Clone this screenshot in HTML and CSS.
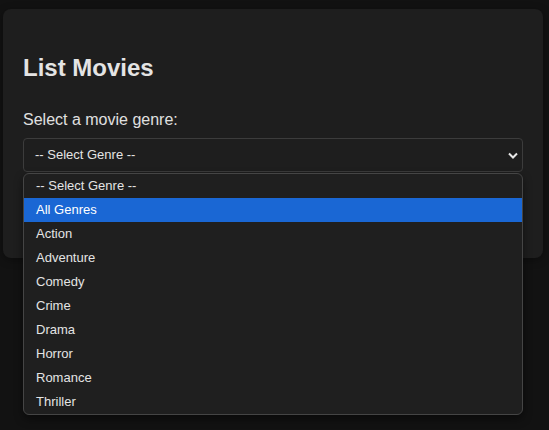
FILE: index.html
```html
<!DOCTYPE html>
<html lang="en">
<head>
<meta charset="utf-8">
<title>List Movies</title>
<link rel="stylesheet" href="styles.css">
</head>
<body>
<main class="card">
  <h2 class="title">List Movies</h2>
  <label class="label" for="genre">Select a movie genre:</label>
  <div class="select-wrap">
    <div class="select" id="genre">
      <span>-- Select Genre --</span>
      <svg class="chevron" width="10" height="7" viewBox="0 0 10 7"><path d="M1 1.5 L5 5.5 L9 1.5" fill="none" stroke="#e8e8e8" stroke-width="2"/></svg>
    </div>
    <ul class="dropdown">
      <li class="option">-- Select Genre --</li>
      <li class="option active">All Genres</li>
      <li class="option">Action</li>
      <li class="option">Adventure</li>
      <li class="option">Comedy</li>
      <li class="option">Crime</li>
      <li class="option">Drama</li>
      <li class="option">Horror</li>
      <li class="option">Romance</li>
      <li class="option">Thriller</li>
    </ul>
  </div>
  <div class="results"></div>
</main>
</body>
</html>
```

FILE: styles.css
```css
* { box-sizing: border-box; }
html, body { height: 100%; }
body {
  margin: 0;
  padding: 9px 6px 0 3px;
  background: #121212;
  font-family: "Liberation Sans", Arial, sans-serif;
  color: #e0e0e0;
  overflow: hidden;
}
.card {
  width: 540px;
  background: #1e1e1e;
  border-radius: 8px;
  padding: 20px;
  box-shadow: 0 2px 8px rgba(0,0,0,0.35);
}
.title {
  margin: 25px 0 0;
  font-size: 24px;
  font-weight: bold;
  line-height: 27.6px;
  color: #e4e4e4;
}
.label {
  display: block;
  margin-top: 29px;
  font-size: 16px;
  line-height: 18px;
  color: #e0e0e0;
}
.select-wrap {
  position: relative;
  margin-top: 9px;
}
.select {
  height: 34px;
  border: 1px solid #3c3c3c;
  border-radius: 4px;
  background: #1e1e1e;
  padding: 0 4px 0 11px;
  display: flex;
  align-items: center;
  justify-content: space-between;
  font-size: 13px;
  color: #e4e4e4;
}
.chevron { margin-top: 1px; }
.dropdown {
  position: absolute;
  top: 35px;
  left: 0;
  right: 0;
  margin: 0;
  padding: 0;
  list-style: none;
  background: #1f1f1f;
  border: 1px solid #454545;
  border-radius: 6px;
  overflow: hidden;
  box-shadow: 0 4px 10px rgba(0,0,0,0.45);
  z-index: 2;
}
.option {
  height: 24px;
  line-height: 24px;
  padding-left: 12px;
  font-size: 13px;
  color: #e4e4e4;
}
.option.active {
  background: #1a67d4;
  color: #ffffff;
}
.results {
  margin-top: 16px;
  height: 50px;
}
```
